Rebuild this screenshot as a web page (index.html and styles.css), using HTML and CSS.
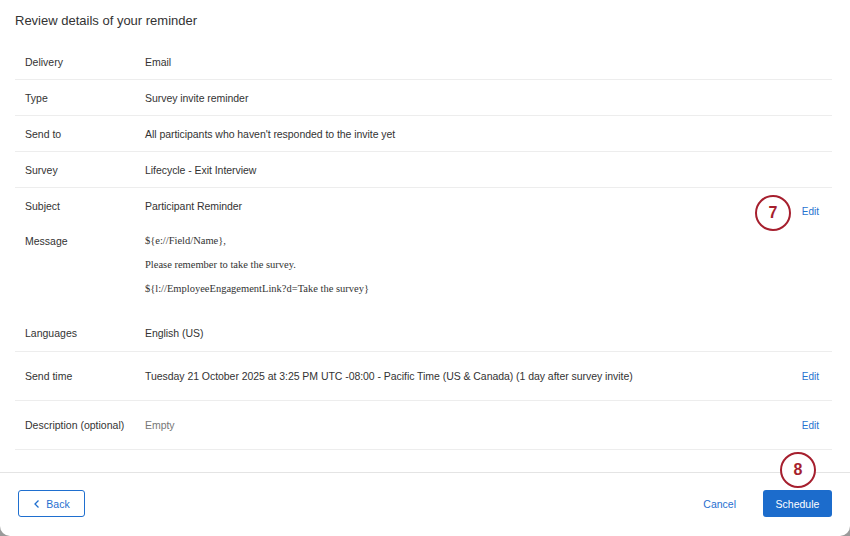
FILE: index.html
```html
<!DOCTYPE html>
<html lang="en">
<head>
  <meta charset="UTF-8" />
  <title>Review reminder</title>
  <link rel="stylesheet" href="styles.css">
</head>
<body>
  <div class="modal">
    <h1 class="title">Review details of your reminder</h1>

    <div class="details">
      <div class="row">
        <span class="label">Delivery</span>
        <span class="value">Email</span>
      </div>
      <div class="row">
        <span class="label">Type</span>
        <span class="value">Survey invite reminder</span>
      </div>
      <div class="row">
        <span class="label">Send to</span>
        <span class="value">All participants who haven't responded to the invite yet</span>
      </div>
      <div class="row">
        <span class="label">Survey</span>
        <span class="value">Lifecycle - Exit Interview</span>
      </div>

      <div class="group">
        <div class="group-body">
          <div class="row plain">
            <span class="label">Subject</span>
            <span class="value">Participant Reminder</span>
          </div>
          <div class="row plain message">
            <span class="label">Message</span>
            <div class="value letter">
              <p>${e://Field/Name},</p>
              <p>Please remember to take the survey.</p>
              <p>${l://EmployeeEngagementLink?d=Take the survey}</p>
            </div>
          </div>
          <div class="row plain">
            <span class="label">Languages</span>
            <span class="value">English (US)</span>
          </div>
        </div>
        <a class="edit group-edit" href="#">Edit</a>
      </div>

      <div class="row tall">
        <span class="label">Send time</span>
        <span class="value">Tuesday 21 October 2025 at 3:25 PM UTC -08:00 - Pacific Time (US &amp; Canada) (1 day after survey invite)</span>
        <a class="edit" href="#">Edit</a>
      </div>
      <div class="row tall">
        <span class="label">Description (optional)</span>
        <span class="value muted">Empty</span>
        <a class="edit" href="#">Edit</a>
      </div>
    </div>

    <div class="footer">
      <button class="btn-back">
        <svg width="8" height="10" viewBox="0 0 8 10"><path d="M5.5 1.5 L2 5 L5.5 8.5" fill="none" stroke="#1f6fcf" stroke-width="1.3"/></svg>
        Back
      </button>
      <div class="actions">
        <button class="btn-cancel">Cancel</button>
        <button class="btn-primary">Schedule</button>
      </div>
    </div>

    <span class="step step-7">7</span>
    <span class="step step-8">8</span>
  </div>
</body>
</html>
```

FILE: styles.css
```css
body {
  margin: 0;
  background-color: #9a9a9a;
  font-family: "Liberation Sans", Arial, sans-serif;
  color: #333;
}

.modal {
  position: relative;
  height: 536px;
  background: white;
  border-radius: 0 0 10px 10px;
  overflow: hidden;
}

.title {
  margin: 0;
  padding: 13px 15px 16px;
  font-size: 13px;
  line-height: 15px;
  font-weight: normal;
  color: #333;
}

.details {
  margin: 0 18px 0 15px;
}

.row {
  display: flex;
  align-items: center;
  height: 35px;
  padding: 0 13px 0 10px;
  border-bottom: 1px solid #ededed;
  font-size: 10.5px;
}

.row.plain {
  border-bottom: none;
  padding-right: 0;
  height: 36px;
}

.row.tall {
  height: 48px;
}

.label {
  width: 120px;
  flex-shrink: 0;
}

.value {
  flex: 1;
  letter-spacing: -0.05px;
}

.muted {
  color: #777;
}

.group {
  display: flex;
  align-items: flex-start;
  padding-right: 13px;
  border-bottom: 1px solid #ededed;
}

.group-body {
  flex: 1;
}

.row.message {
  height: auto;
  align-items: flex-start;
  padding-top: 5px;
  padding-bottom: 14px;
  line-height: 24px;
}

.letter {
  font-family: "Liberation Serif", "Times New Roman", serif;
  font-size: 10.5px;
  letter-spacing: 0;
}

.letter p {
  margin: 0;
}

.edit {
  color: #2673d0;
  text-decoration: none;
  font-size: 10px;
}

.group-edit {
  margin-top: 18px;
}

.footer {
  margin-top: 22px;
  border-top: 1px solid #e4e4e4;
  padding: 17px 18px;
  display: flex;
  justify-content: space-between;
  align-items: center;
}

.actions {
  display: flex;
  align-items: center;
  gap: 27px;
}

button {
  font-family: "Liberation Sans", Arial, sans-serif;
  font-size: 10.5px;
  cursor: pointer;
}

.btn-back {
  width: 67px;
  height: 27px;
  background: white;
  border: 1px solid #1f6fcf;
  border-radius: 3px;
  color: #1f6fcf;
  display: flex;
  align-items: center;
  justify-content: center;
  gap: 5px;
  padding: 0;
}

.btn-cancel {
  background: none;
  border: none;
  color: #1f6fcf;
  padding: 0;
}

.btn-primary {
  width: 69px;
  height: 27px;
  background-color: #1c6ccc;
  color: white;
  border: none;
  border-radius: 3px;
  padding: 0;
}

.step {
  position: absolute;
  width: 32px;
  height: 32px;
  border: 2.5px solid #a61f2e;
  border-radius: 50%;
  background: white;
  color: #a61f2e;
  font-size: 16px;
  font-weight: bold;
  display: flex;
  align-items: center;
  justify-content: center;
}

.step-7 {
  left: 755px;
  top: 195px;
}

.step-8 {
  left: 780px;
  top: 452px;
}
```
